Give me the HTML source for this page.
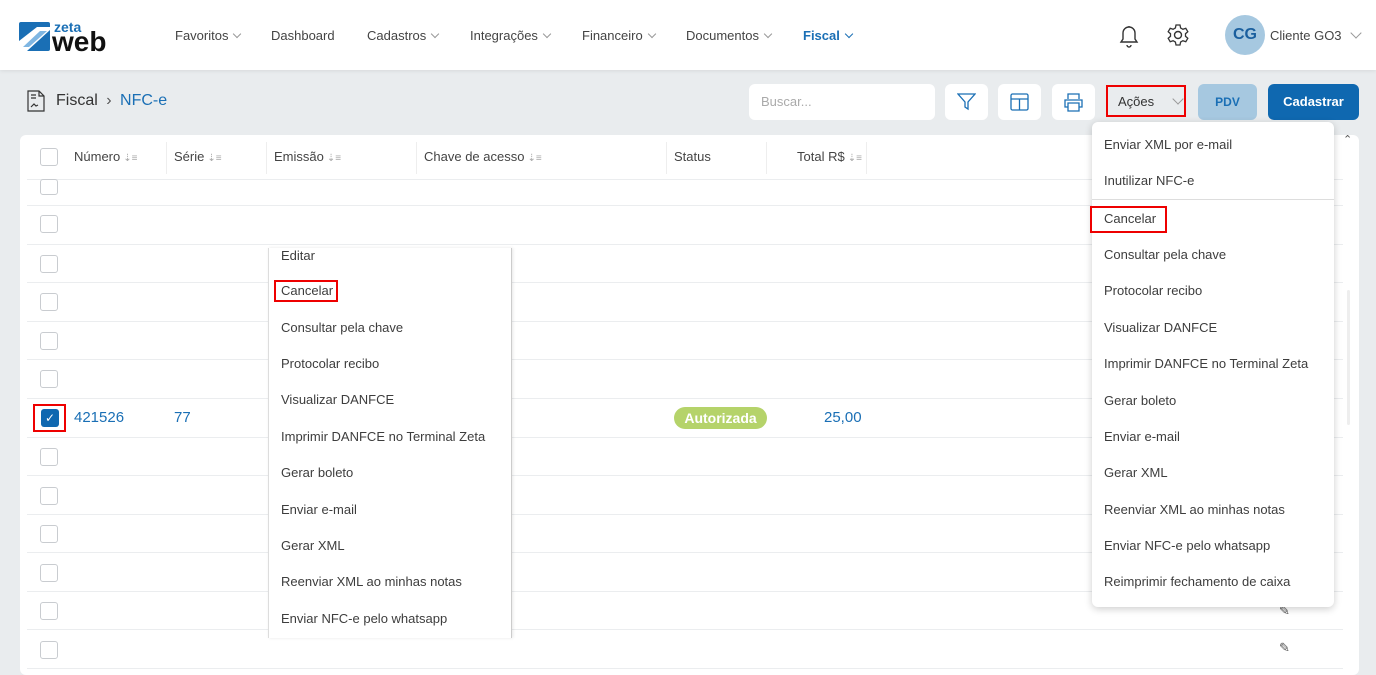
<!DOCTYPE html>
<html><head><meta charset="utf-8"><style>
*{box-sizing:border-box;margin:0;padding:0}
body{width:1376px;height:671px;overflow:hidden;background:#e9ecee;font-family:"Liberation Sans",Arial,sans-serif;font-size:13px;color:#3a3a3a;position:relative}
.abs{position:absolute}
.hdr{left:0;top:0;width:1376px;height:70px;background:#fff;box-shadow:0 1px 4px rgba(0,0,0,.08)}
.nav{top:28px;font-size:13px;color:#444;white-space:nowrap}
.chev{display:inline-block;width:6px;height:6px;border-right:1px solid #999;border-bottom:1px solid #999;transform:rotate(45deg);margin-left:6px;position:relative;top:-3px}
.btn{background:#fff;border-radius:6px;height:36px;top:84px}
.card{left:20px;top:135px;width:1339px;height:540px;background:#fff;border-radius:6px}
.cb{width:18px;height:18px;border:1px solid #c9ccd0;border-radius:3px;background:#fff;left:40px}
.rl{left:27px;width:1316px;height:1px;background:#ebedef}
.th{top:149px;font-size:13px;color:#444}
.sort{color:#aaa;font-size:10px;margin-left:3px}
.menu{background:#fff}
.mi{position:absolute;left:12px;font-size:13px;color:#3d3d3d;white-space:nowrap}
.red{position:absolute;border:2px solid #e00}
</style></head><body>
<div class="abs hdr"></div>
<svg class="abs" style="left:19px;top:19px" width="100" height="34" viewBox="0 0 100 34">
<rect x="0" y="3" width="31" height="29" rx="2" fill="#1a6fb5"/>
<polygon points="0,22 18,8 31,8 31,11 8,32 0,32" fill="#fff"/>
<polygon points="4,28 21,12 28,12 10,28" fill="#7fb6e2"/>
<text x="35" y="13" font-family="Liberation Sans" font-size="14" fill="#1a6fb5" font-weight="bold">zeta</text>
<text x="33" y="32" font-family="Liberation Sans" font-size="28" fill="#111" font-weight="bold">web</text>
</svg>
<div class="abs nav" style="left:175px">Favoritos<span class="chev"></span></div>
<div class="abs nav" style="left:271px">Dashboard</div>
<div class="abs nav" style="left:367px">Cadastros<span class="chev"></span></div>
<div class="abs nav" style="left:470px">Integrações<span class="chev"></span></div>
<div class="abs nav" style="left:582px">Financeiro<span class="chev"></span></div>
<div class="abs nav" style="left:686px">Documentos<span class="chev"></span></div>
<div class="abs nav" style="left:803px;color:#1a6fb5;font-weight:bold">Fiscal<span class="chev" style="border-color:#1a6fb5"></span></div>
<svg class="abs" style="left:1117px;top:23px" width="24" height="26" viewBox="0 0 24 26"><path d="M4 19h16l-2-3v-6a6 6 0 0 0-12 0v6z M10 22a2 2 0 0 0 4 0 M12 3v1" fill="none" stroke="#333" stroke-width="1.4"/></svg>
<svg class="abs" style="left:1166px;top:23px" width="24" height="24" viewBox="0 0 24 24"><circle cx="12" cy="12" r="3.5" fill="none" stroke="#333" stroke-width="1.4"/><path d="M10 2h4l.6 3 2.3 1.3 2.9-1 2 3.4-2.3 2v2.6l2.3 2-2 3.4-2.9-1-2.3 1.3-.6 3h-4l-.6-3-2.3-1.3-2.9 1-2-3.4 2.3-2v-2.6l-2.3-2 2-3.4 2.9 1L9.4 5z" fill="none" stroke="#333" stroke-width="1.3"/></svg>
<div class="abs" style="left:1225px;top:15px;width:40px;height:40px;border-radius:50%;background:#a6c8e0;color:#1a5f9e;font-weight:bold;font-size:16px;text-align:center;line-height:40px">CG</div>
<div class="abs nav" style="left:1270px">Cliente GO3<span class="chev" style="margin-left:10px;width:8px;height:8px"></span></div>

<svg class="abs" style="left:27px;top:90px" width="18" height="22" viewBox="0 0 18 22"><path d="M1 1h11l5 5v15H1z M12 1v5h5 M4 5h5 M4 8h5 M4 17l3-3 2 2 2-1" fill="none" stroke="#333" stroke-width="1.2"/></svg>
<div class="abs" style="left:56px;top:92px;font-size:16px;color:#333">Fiscal <span style="margin:0 4px;color:#555">›</span> <span style="color:#1a6fb5">NFC-e</span></div>

<div class="abs btn" style="left:749px;width:186px"><span style="position:absolute;left:12px;top:10px;color:#aaa">Buscar...</span></div>
<div class="abs btn" style="left:945px;width:43px"><svg style="position:absolute;left:12px;top:9px" width="19" height="18" viewBox="0 0 19 18"><path d="M1 1h17l-7 8v7l-3-2V9z" fill="none" stroke="#1a6fb5" stroke-width="1.3"/></svg></div>
<div class="abs btn" style="left:998px;width:43px"><svg style="position:absolute;left:12px;top:9px" width="19" height="18" viewBox="0 0 19 18"><rect x="1" y="1" width="17" height="16" rx="1.5" fill="none" stroke="#1a6fb5" stroke-width="1.3"/><path d="M1 6h17M9.5 6v11" stroke="#1a6fb5" stroke-width="1.3"/></svg></div>
<div class="abs btn" style="left:1052px;width:43px"><svg style="position:absolute;left:11px;top:8px" width="21" height="20" viewBox="0 0 21 20"><path d="M5 7V2h11v5 M5 15H2V8h17v7h-3 M5 11h11v8H5z" fill="none" stroke="#1a6fb5" stroke-width="1.3"/></svg></div>
<div class="abs" style="left:1106px;top:85px;width:80px;height:32px;border:2px solid #e00;background:#e9ecee"><span style="position:absolute;left:10px;top:7px;color:#333">Ações</span><span class="chev" style="position:absolute;left:60px;top:8px;width:8px;height:8px"></span></div>
<div class="abs" style="left:1198px;top:84px;width:59px;height:36px;border-radius:6px;background:#a6c8e0;color:#1a6fb5;font-weight:bold;text-align:center;line-height:36px;font-size:12px">PDV</div>
<div class="abs" style="left:1268px;top:84px;width:91px;height:36px;border-radius:6px;background:#0f68b0;color:#fff;font-weight:bold;text-align:center;line-height:36px">Cadastrar</div>

<div class="abs card"></div>
<div class="abs cb" style="top:148px"></div>
<div class="abs th" style="left:74px">Número<span class="sort">⇣≡</span></div>
<div class="abs th" style="left:174px">Série<span class="sort">⇣≡</span></div>
<div class="abs th" style="left:274px">Emissão<span class="sort">⇣≡</span></div>
<div class="abs th" style="left:424px">Chave de acesso<span class="sort">⇣≡</span></div>
<div class="abs th" style="left:674px">Status</div>
<div class="abs th" style="left:797px">Total R$<span class="sort">⇣≡</span></div>
<div class="abs" style="left:166px;top:142px;width:1px;height:32px;background:#eee"></div>
<div class="abs" style="left:266px;top:142px;width:1px;height:32px;background:#eee"></div>
<div class="abs" style="left:416px;top:142px;width:1px;height:32px;background:#eee"></div>
<div class="abs" style="left:666px;top:142px;width:1px;height:32px;background:#eee"></div>
<div class="abs" style="left:766px;top:142px;width:1px;height:32px;background:#eee"></div>
<div class="abs" style="left:866px;top:142px;width:1px;height:32px;background:#eee"></div>
<div class="abs" style="left:1343px;top:133px;font-size:11px;color:#555">⌃</div>
<div class="abs" style="left:1347px;top:290px;width:3px;height:135px;background:#eee;border-radius:2px"></div>

<div class="abs rl" style="top:179px"></div>
<div class="abs rl" style="top:205px"></div><div class="abs rl" style="top:244px"></div><div class="abs rl" style="top:282px"></div><div class="abs rl" style="top:321px"></div><div class="abs rl" style="top:359px"></div><div class="abs rl" style="top:398px"></div><div class="abs rl" style="top:437px"></div><div class="abs rl" style="top:475px"></div><div class="abs rl" style="top:514px"></div><div class="abs rl" style="top:552px"></div><div class="abs rl" style="top:591px"></div><div class="abs rl" style="top:629px"></div><div class="abs rl" style="top:668px"></div>
<div class="abs cb" style="top:179px;height:16px"></div>
<div class="abs cb" style="top:215px"></div><div class="abs cb" style="top:255px"></div><div class="abs cb" style="top:293px"></div><div class="abs cb" style="top:332px"></div><div class="abs cb" style="top:370px"></div>
<div class="abs cb" style="top:448px"></div><div class="abs cb" style="top:487px"></div><div class="abs cb" style="top:525px"></div><div class="abs cb" style="top:564px"></div><div class="abs cb" style="top:602px"></div><div class="abs cb" style="top:641px"></div>
<div class="red" style="left:33px;top:404px;width:33px;height:28px"></div>
<div class="abs" style="left:41px;top:409px;width:18px;height:18px;border-radius:3px;background:#0f68b0;color:#fff;font-size:12px;text-align:center;line-height:18px">✓</div>
<div class="abs" style="left:74px;top:409px;font-size:15px;color:#1a6fb5">421526</div>
<div class="abs" style="left:174px;top:409px;font-size:15px;color:#1a6fb5">77</div>
<div class="abs" style="left:674px;top:407px;width:93px;height:22px;border-radius:11px;background:#b5d36a;color:#fff;font-weight:bold;text-align:center;line-height:22px;font-size:14px">Autorizada</div>
<div class="abs" style="left:824px;top:409px;font-size:15px;color:#1a6fb5">25,00</div>
<div class="abs" style="left:1279px;top:603px;color:#555;font-size:13px">✎</div>
<div class="abs" style="left:1279px;top:640px;color:#555;font-size:13px">✎</div>

<div class="abs menu" style="left:268px;top:248px;width:244px;height:390px;border-left:1px solid #ddd;border-right:1px solid #ccc;box-shadow:1px 0 3px rgba(0,0,0,.1)">
<div class="mi" style="top:0">Editar</div>
<div class="mi" style="top:35px">Cancelar</div>
<div class="mi" style="top:72px">Consultar pela chave</div>
<div class="mi" style="top:108px">Protocolar recibo</div>
<div class="mi" style="top:144px">Visualizar DANFCE</div>
<div class="mi" style="top:181px">Imprimir DANFCE no Terminal Zeta</div>
<div class="mi" style="top:217px">Gerar boleto</div>
<div class="mi" style="top:254px">Enviar e-mail</div>
<div class="mi" style="top:290px">Gerar XML</div>
<div class="mi" style="top:326px">Reenviar XML ao minhas notas</div>
<div class="mi" style="top:363px">Enviar NFC-e pelo whatsapp</div>
</div>
<div class="red" style="left:274px;top:280px;width:64px;height:22px"></div>

<div class="abs menu" style="left:1092px;top:122px;width:242px;height:485px;border-radius:6px;box-shadow:0 2px 8px rgba(0,0,0,.2)">
<div class="mi" style="top:15px">Enviar XML por e-mail</div>
<div class="mi" style="top:51px">Inutilizar NFC-e</div>
<div class="abs" style="left:0;top:77px;width:242px;height:1px;background:#ddd"></div>
<div class="mi" style="top:89px">Cancelar</div>
<div class="mi" style="top:125px">Consultar pela chave</div>
<div class="mi" style="top:161px">Protocolar recibo</div>
<div class="mi" style="top:198px">Visualizar DANFCE</div>
<div class="mi" style="top:234px">Imprimir DANFCE no Terminal Zeta</div>
<div class="mi" style="top:271px">Gerar boleto</div>
<div class="mi" style="top:307px">Enviar e-mail</div>
<div class="mi" style="top:343px">Gerar XML</div>
<div class="mi" style="top:380px">Reenviar XML ao minhas notas</div>
<div class="mi" style="top:416px">Enviar NFC-e pelo whatsapp</div>
<div class="mi" style="top:452px">Reimprimir fechamento de caixa</div>
</div>
<div class="red" style="left:1090px;top:206px;width:77px;height:27px"></div>
</body></html>
